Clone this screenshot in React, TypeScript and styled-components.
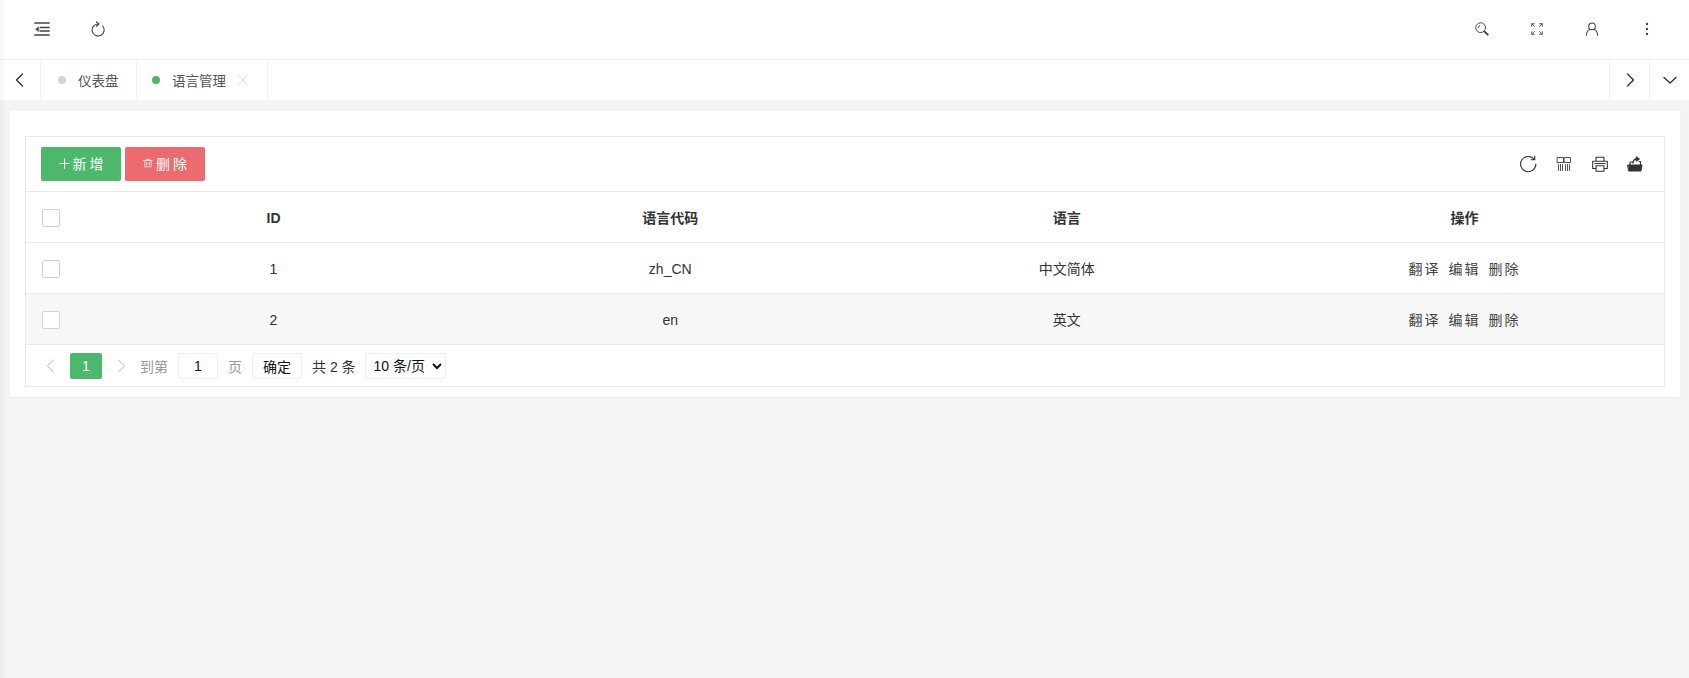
import React from "react";
import styled, { createGlobalStyle } from "styled-components";

const Global = createGlobalStyle`
  html, body { margin: 0; padding: 0; height: 100%; }
  body { background: #f4f4f4; font-family: "Liberation Sans", "Noto Sans CJK SC", sans-serif; color: #333; font-size: 14px; }
  #root { height: 100%; }
`;

const Page = styled.div`
  position: relative;
  width: 1689px;
  height: 678px;
  overflow: hidden;
  display: flex;
  flex-direction: column;
  &::before {
    content: "";
    position: absolute;
    left: 0;
    top: 0;
    bottom: 0;
    width: 6px;
    background: linear-gradient(to right, rgba(0,0,0,0.035), transparent);
    pointer-events: none;
  }
`;
const Header = styled.header`
  height: 59px;
  background: #fff;
  border-bottom: 1px solid #f1f1f1;
  display: flex;
  justify-content: space-between;
  align-items: flex-start;
  flex: none;
`;
const IconGroup = styled.div`
  display: flex;
  align-items: center;
`;
const HeaderBtn = styled.div<{ $w: number }>`
  width: ${(p) => p.$w}px;
  height: 57px;
  display: flex;
  align-items: center;
  justify-content: center;
  color: #444;
`;
const HeaderEnd = styled.div`
  width: 15px;
`;
const TabBar = styled.nav`
  height: 40px;
  background: #fff;
  display: flex;
  flex: none;
`;
const TabArrow = styled.div<{ $right?: boolean }>`
  width: ${(p) => (p.$right ? 40 : 41)}px;
  display: flex;
  align-items: center;
  justify-content: center;
  color: #333;
  ${(p) => (p.$right ? "border-left: 1px solid #f1f1f1;" : "border-right: 1px solid #f1f1f1;")}
  box-sizing: border-box;
`;
const Tab = styled.div<{ $w: number; $pad: number }>`
  width: ${(p) => p.$w}px;
  box-sizing: border-box;
  border-right: 1px solid #f1f1f1;
  display: flex;
  align-items: center;
  padding-left: ${(p) => p.$pad}px;
  color: #555;
  font-size: 13.5px;
`;
const Dot = styled.span<{ $on?: boolean }>`
  width: 8px;
  height: 8px;
  border-radius: 50%;
  background: ${(p) => (p.$on ? "#4cb86b" : "#d2d2d2")};
  margin-right: 12px;
  flex: none;
`;
const TabSpacer = styled.div`
  flex: 1;
`;
const Close = styled.span`
  display: flex;
  margin-left: 12px;
  color: #c8c8c8;
`;
const Main = styled.main`
  flex: 1;
  padding: 11px 9px 0 10px;
`;
const Card = styled.section`
  background: #fff;
  border-radius: 2px;
  box-shadow: 0 1px 2px rgba(0,0,0,0.05);
  padding: 25px 15px 10px;
`;
const TableBox = styled.div`
  border: 1px solid #e9e9e9;
`;
const Toolbar = styled.div`
  height: 54px;
  padding: 0 21px 0 15px;
  display: flex;
  align-items: center;
  justify-content: space-between;
  border-bottom: 1px solid #e9e9e9;
`;
const Buttons = styled.div`
  display: flex;
  gap: 4px;
`;
const Btn = styled.button<{ $bg: string }>`
  width: 80px;
  height: 34px;
  border: none;
  border-radius: 2px;
  background: ${(p) => p.$bg};
  color: #fff;
  font: inherit;
  font-size: 14px;
  letter-spacing: 3px;
  display: flex;
  align-items: center;
  justify-content: center;
  gap: 3px;
  padding: 0 0 2px 3px;
`;
const ToolIcons = styled.div`
  display: flex;
  align-items: center;
  gap: 18px;
  color: #333;
`;
const Row = styled.div<{ $alt?: boolean; $head?: boolean }>`
  display: grid;
  grid-template-columns: 49px 397px 396.5px 396.5px 1fr;
  height: 50px;
  border-bottom: 1px solid #e9e9e9;
  background: ${(p) => (p.$alt ? "#f7f7f7" : "#fff")};
  align-items: center;
  text-align: center;
  font-size: 14px;
  font-weight: ${(p) => (p.$head ? 700 : 400)};
  color: #333;
`;
const LatinCell = styled.span`
  padding-top: 2px;
`;
const Check = styled.span`
  width: 16px;
  height: 16px;
  border: 1px solid #d2d2d2;
  border-radius: 2px;
  background: #fff;
  margin: 2px 0 0 16px;
  display: block;
`;
const Action = styled.span`
  letter-spacing: 2px;
  margin: 0 4px;
  color: #444;
`;
const Pager = styled.div`
  height: 41px;
  display: flex;
  align-items: center;
  padding-left: 15px;
  font-size: 14px;
`;
const PageArrow = styled.span`
  display: flex;
  width: 20px;
  justify-content: center;
  color: #d2d2d2;
`;
const PageNum = styled.span`
  width: 32px;
  height: 26px;
  background: #4cb86b;
  border-radius: 2px;
  color: #fff;
  display: flex;
  align-items: center;
  justify-content: center;
  margin: 0 9px;
`;
const Muted = styled.span<{ $l: number }>`
  color: #999;
  margin-left: ${(p) => p.$l}px;
`;
const PageBox = styled.span<{ $w: number; $l: number }>`
  width: ${(p) => p.$w}px;
  height: 26px;
  margin-left: ${(p) => p.$l}px;
  box-sizing: border-box;
  border: 1px solid #eee;
  border-radius: 2px;
  display: flex;
  align-items: center;
  justify-content: center;
  color: #111;
  background: #fff;
`;
const Total = styled.span`
  margin-left: 10px;
`;
const Select = styled.select`
  width: 81px;
  height: 26px;
  margin-left: 9px;
  border: 1px solid #eee;
  border-radius: 2px;
  background: #fff;
  font: inherit;
  color: #111;
  padding: 0 4px;
`;

const Svg = ({ s = 16, vb = 16, children, w = 1.4 }: { s?: number; vb?: number; children: React.ReactNode; w?: number }) => (
  <svg width={s} height={s} viewBox={`0 0 ${vb} ${vb}`} fill="none" stroke="currentColor" strokeWidth={w} strokeLinecap="round" strokeLinejoin="round">
    {children}
  </svg>
);

const Left = ({ w = 1.4 }: { w?: number }) => <Svg w={w}><path d="M10.5 2 4.5 8l6 6" /></Svg>;
const Right = ({ w = 1.4 }: { w?: number }) => <Svg w={w}><path d="M5.5 2l6 6-6 6" /></Svg>;

const rows = [
  { id: 1, code: "zh_CN", name: "中文简体" },
  { id: 2, code: "en", name: "英文" },
];

export default function App() {
  return (
    <Page>
      <Global />
      <Header>
        <IconGroup>
          <HeaderBtn $w={84}>
            <Svg><path d="M1 2h14M6.5 6.5H15M6.500 10H15M1 14h14" strokeWidth={1.7} /><path d="M4.500 6 1.500 8.200l3 2.200z" fill="currentColor" strokeWidth={0.6} /></Svg>
          </HeaderBtn>
          <HeaderBtn $w={28}>
            <Svg w={1.1}><path d="M8 3A6 6 0 1 0 12.600 5" /><path d="M6.300.8 9 3 6.300 5.200" /></Svg>
          </HeaderBtn>
        </IconGroup>
        <IconGroup>
          <HeaderBtn $w={55}>
            <Svg s={14} w={1.1}><circle cx="6.500" cy="6.500" r="5.600" /><path d="M3.800 6.500A2.700 2.700 0 0 1 5.500 4" /><path d="M11 11l3.500 3.500" strokeWidth={2.2} /></Svg>
          </HeaderBtn>
          <HeaderBtn $w={55}>
            <Svg s={14} w={1}><path d="M2 5V2h3M2 2l3 3M14 5V2h-3M14 2l-3 3M2 11v3h3M2 14l3-3M14 11v3h-3M14 14l-3-3" /></Svg>
          </HeaderBtn>
          <HeaderBtn $w={55}>
            <Svg s={14} w={1.2}><circle cx="8" cy="5" r="3.800" /><path d="M1.500 15c0-3.500 2.500-6 4-6.500M14.500 15c0-3.500-2.500-6-4-6.500" /></Svg>
          </HeaderBtn>
          <HeaderBtn $w={55}>
            <Svg w={0}><circle cx="8" cy="3" r="1.200" fill="currentColor" /><circle cx="8" cy="8" r="1.200" fill="currentColor" /><circle cx="8" cy="13" r="1.200" fill="currentColor" /></Svg>
          </HeaderBtn>
          <HeaderEnd />
        </IconGroup>
      </Header>
      <TabBar>
        <TabArrow><Left /></TabArrow>
        <Tab $w={96} $pad={17}><Dot />仪表盘</Tab>
        <Tab $w={131} $pad={15}><Dot $on />语言管理<Close><Svg s={10} w={1}><path d="M1 1l14 14M15 1 1 15" /></Svg></Close></Tab>
        <TabSpacer />
        <TabArrow $right><Right /></TabArrow>
        <TabArrow $right>
          <Svg><path d="M2 5.500 8 11l6-5.500" /></Svg>
        </TabArrow>
      </TabBar>
      <Main>
        <Card>
          <TableBox>
            <Toolbar>
              <Buttons>
                <Btn $bg="#4cb86b">
                  <Svg s={11} w={1.5}><path d="M8 1v14M1 8h14" /></Svg>新增
                </Btn>
                <Btn $bg="#ed6a6f">
                  <Svg s={10} w={1.2}><path d="M1 4h14M5 4V2h6v2M3 4v10h10V4M6 7v4M10 7v4" /></Svg>删除
                </Btn>
              </Buttons>
              <ToolIcons>
                <Svg s={18} w={0.95}><path d="M13.500 3.800A6.800 6.800 0 1 0 15 8M14 1v3.300h-3.300" /></Svg>
                <Svg s={18} vb={18} w={0.85}><path d="M2.500 2.500h6v5h-6zM9.500 2.500h6v5h-6zM3.500 9.500v6M5.500 9.500v6M7.500 9.500v6M10.500 9.500v6M12.500 9.500v6M14.500 9.500v6" /></Svg>
                <Svg s={18} w={0.95}><path d="M4.500 5V2h7v3M4.500 12H1.500V5.500h13V12h-3M4.500 9.500h7V14.500h-7zM3.500 7.500h9" /></Svg>
                <Svg s={16} w={1}><path d="M1 9h14l-1 6H2z" fill="currentColor" /><path d="M3 9V6h2.500M13.500 9V5.500H12" strokeWidth={1.1} /><path d="M6 7c0-2.500 1.500-4 4-4" strokeWidth={1.3} /><path d="M9.500 1 12.500 3 9.500 5z" fill="currentColor" /></Svg>
              </ToolIcons>
            </Toolbar>
            <Row $head>
              <Check />
              <LatinCell>ID</LatinCell>
              <span>语言代码</span>
              <span>语言</span>
              <span>操作</span>
            </Row>
            {rows.map((r, i) => (
              <Row key={r.id} $alt={i === 1}>
                <Check />
                <LatinCell>{r.id}</LatinCell>
                <LatinCell>{r.code}</LatinCell>
                <span>{r.name}</span>
                <div>
                  <Action>翻译</Action>
                  <Action>编辑</Action>
                  <Action>删除</Action>
                </div>
              </Row>
            ))}
            <Pager>
              <PageArrow><Left w={1.1} /></PageArrow>
              <PageNum>1</PageNum>
              <PageArrow><Right w={1.1} /></PageArrow>
              <Muted $l={9}>到第</Muted>
              <PageBox $w={40} $l={10}>1</PageBox>
              <Muted $l={10}>页</Muted>
              <PageBox $w={50} $l={10}>确定</PageBox>
              <Total>共 2 条</Total>
              <Select defaultValue="10"><option value="10">10 条/页</option></Select>
            </Pager>
          </TableBox>
        </Card>
      </Main>
    </Page>
  );
}
